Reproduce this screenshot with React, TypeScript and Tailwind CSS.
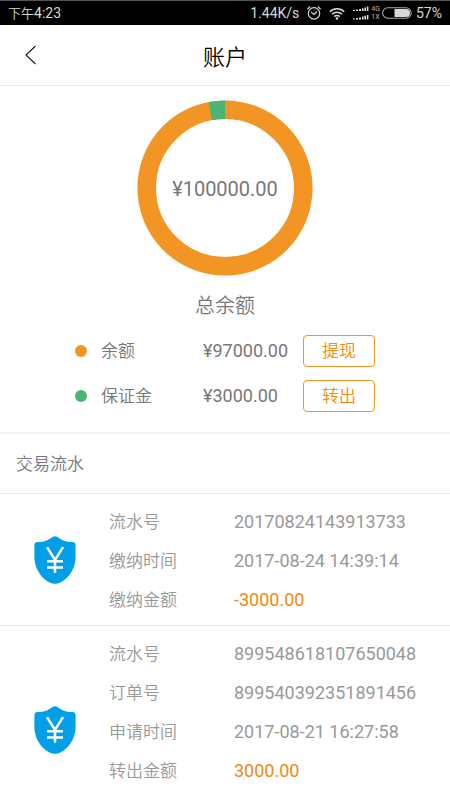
const balances = [
    { label: '余额', amount: '¥97000.00', action: '提现', dot: 'bg-[#f29524]' },
    { label: '保证金', amount: '¥3000.00', action: '转出', dot: 'bg-[#4bb477]' },
];

const records = [
    {
        iconOffset: 'pb-0.5',
        rows: [
            { label: '流水号', value: '20170824143913733' },
            { label: '缴纳时间', value: '2017-08-24 14:39:14' },
            { label: '缴纳金额', value: '-3000.00', highlight: true },
        ],
    },
    {
        iconOffset: 'pt-9',
        rows: [
            { label: '流水号', value: '899548618107650048' },
            { label: '订单号', value: '899540392351891456' },
            { label: '申请时间', value: '2017-08-21 16:27:58' },
            { label: '转出金额', value: '3000.00', highlight: true },
        ],
    },
];

const StatusBar = () => {
    return <div className="h-[25px] flex items-center justify-between bg-black border-t border-[#555] px-2 text-[#d8d8d8]">
        <span className="text-[13px] font-[350]">下午<span className="text-sm font-normal">4:23</span></span>
        <div className="flex items-center">
            <span className="text-sm mr-2">1.44K/s</span>
            <svg className="mr-2" width="14" height="14" viewBox="0 0 14 14" fill="none" stroke="currentColor" strokeWidth="1.2" strokeLinecap="round">
                <circle cx="7" cy="7.4" r="5.7" />
                <path d="M4.6 6.4 7 8.4l2.6-2.4M.8 2.8 2.8 1M13.2 2.8 11.2 1" />
            </svg>
            <svg className="mr-2" width="16" height="13" viewBox="0 0 16 13" fill="none" stroke="currentColor" strokeWidth="1.6">
                <path d="M.8 4.8a10.2 10.2 0 0 1 14.4 0M3.1 7.3a6.9 6.9 0 0 1 9.8 0M5.3 9.6a3.8 3.8 0 0 1 5.4 0" />
                <circle cx="8" cy="11.5" r="1.3" fill="currentColor" stroke="none" />
            </svg>
            <svg className="mr-0.5" width="16" height="15" viewBox="0 0 16 15" fill="currentColor">
                <path d="M0 4h2v1H0zM3 3.600h2V5H3zM6 3h2v2H6zM9 2.200h1.600V5H9zM11.400 1.400H13V5h-1.600zM13.800.6h1.600V5h-1.600z" />
                <path d="M0 12.400h2v1H0zM3 12h2v1.400H3zM6 11.400h2v2H6zM9 10.600h1.600v2.800H9zM11.400 9.800H13v3.600h-1.600zM13.800 9h1.600v4.400h-1.600z" />
            </svg>
            <span className="flex flex-col text-[7px] leading-[8px] mr-0.5 text-[#bbb]">
                <span>4G</span>
                <span>1X</span>
            </span>
            <svg className="mr-1" width="30" height="12" viewBox="0 0 30 12">
                <rect x=".6" y=".8" width="28.6" height="10.4" rx="5.2" fill="none" stroke="#aaa" strokeWidth="1.1" />
                <path d="M12.5 2H24a4 4 0 0 1 0 8H12.5z" fill="#d8d8d8" />
            </svg>
            <span className="text-sm">57%</span>
        </div>
    </div>;
};

const Header = () => {
    return <header className="h-[61px] grid grid-cols-3 items-center border-b border-[#ececec]">
        <button type="button" aria-label="返回" className="justify-self-start pl-6 cursor-pointer">
            <svg width="14" height="20" viewBox="0 0 14 20" fill="none" stroke="#222" strokeWidth="1.2">
                <path d="M11.5 1 2 10l9.500 9" />
            </svg>
        </button>
        <h1 className="pt-1 text-center text-[22px] font-[350] text-black">账户</h1>
    </header>;
};

const BalanceRing = () => {
    return <div className="grid place-items-center">
        <svg className="col-start-1 row-start-1" width="176" height="176" viewBox="0 0 176 176" fill="none" strokeWidth="18.6">
            <circle cx="88" cy="88" r="78.3" stroke="#f29524" />
            <circle cx="88" cy="88" r="78.3" stroke="#4bb477" pathLength="100" strokeDasharray="3 97" transform="rotate(-100.8 88 88)" />
        </svg>
        <span className="col-start-1 row-start-1 pt-0.5 text-xl">¥100000.00</span>
    </div>;
};

const ShieldIcon = () => {
    return <svg width="42" height="48" viewBox="0 0 42 48">
        <path d="M18.2 1.2q2.8-1.8 5.6 0C28 4.4 32 6 38.5 6Q41.600 6.400 41.600 9.500V21C41.600 34 32.500 45 23.500 47.500q-2.500.6-5 0C9.500 45 .4 34 .4 21V9.500Q.4 6.400 3.500 6C10 6 14 4.400 18.200 1.200z" fill="#009fe8" />
        <path d="M13 11.200 21 24l8-12.800M21 24v12.800M13 25.200h16M13 31.400h16" fill="none" stroke="#fff" strokeWidth="2.500" />
    </svg>;
};

const App = () => {
    return <div className="min-h-screen bg-white text-[#777] font-[Roboto,'Noto_Sans_CJK_SC',sans-serif]">
        <StatusBar />
        <Header />
        <main>
            <section className="pt-3.5 pb-3.5 border-b-2 border-[#f2f2f2]">
                <BalanceRing />
                <h2 className="mt-3.5 text-center text-xl leading-8 font-[350]">总余额</h2>
                <ul className="mt-1.5">
                    {balances.map((item) => (
                        <li key={item.label} className="h-[45px] grid grid-cols-[128px_100px_72px] items-center justify-center">
                            <span className="flex items-center gap-3.5 text-[17px] font-[350] whitespace-nowrap">
                                <span className={`block w-3 h-3 rounded-full ${item.dot}`}></span>
                                <span className="pt-0.5">{item.label}</span>
                            </span>
                            <span className="text-lg">{item.amount}</span>
                            <button type="button" className="h-8 pt-0.5 rounded border border-[#f29524] text-[17px] font-[350] text-[#f08a10] cursor-pointer">
                                {item.action}
                            </button>
                        </li>
                    ))}
                </ul>
            </section>
            <section>
                <h2 className="h-[59px] flex items-center px-4 pt-0.5 text-[17px] font-[350]">交易流水</h2>
                {records.map((record) => (
                    <article key={record.rows[0].value} className="flex items-center border-t border-[#ececec] pt-2 pb-1.5 text-[#999]">
                        <div className={`w-[109px] flex justify-center ${record.iconOffset}`}>
                            <ShieldIcon />
                        </div>
                        <dl className="flex-1">
                            {record.rows.map((row) => (
                                <div key={row.label} className="h-[39px] flex items-baseline leading-[39px]">
                                    <dt className="w-[125px] text-[17px] font-[350]">{row.label}</dt>
                                    <dd className={`text-lg leading-[39px] ${row.highlight ? 'text-[#f08a10]' : ''}`}>{row.value}</dd>
                                </div>
                            ))}
                        </dl>
                    </article>
                ))}
            </section>
        </main>
    </div>;
};

export default App;
